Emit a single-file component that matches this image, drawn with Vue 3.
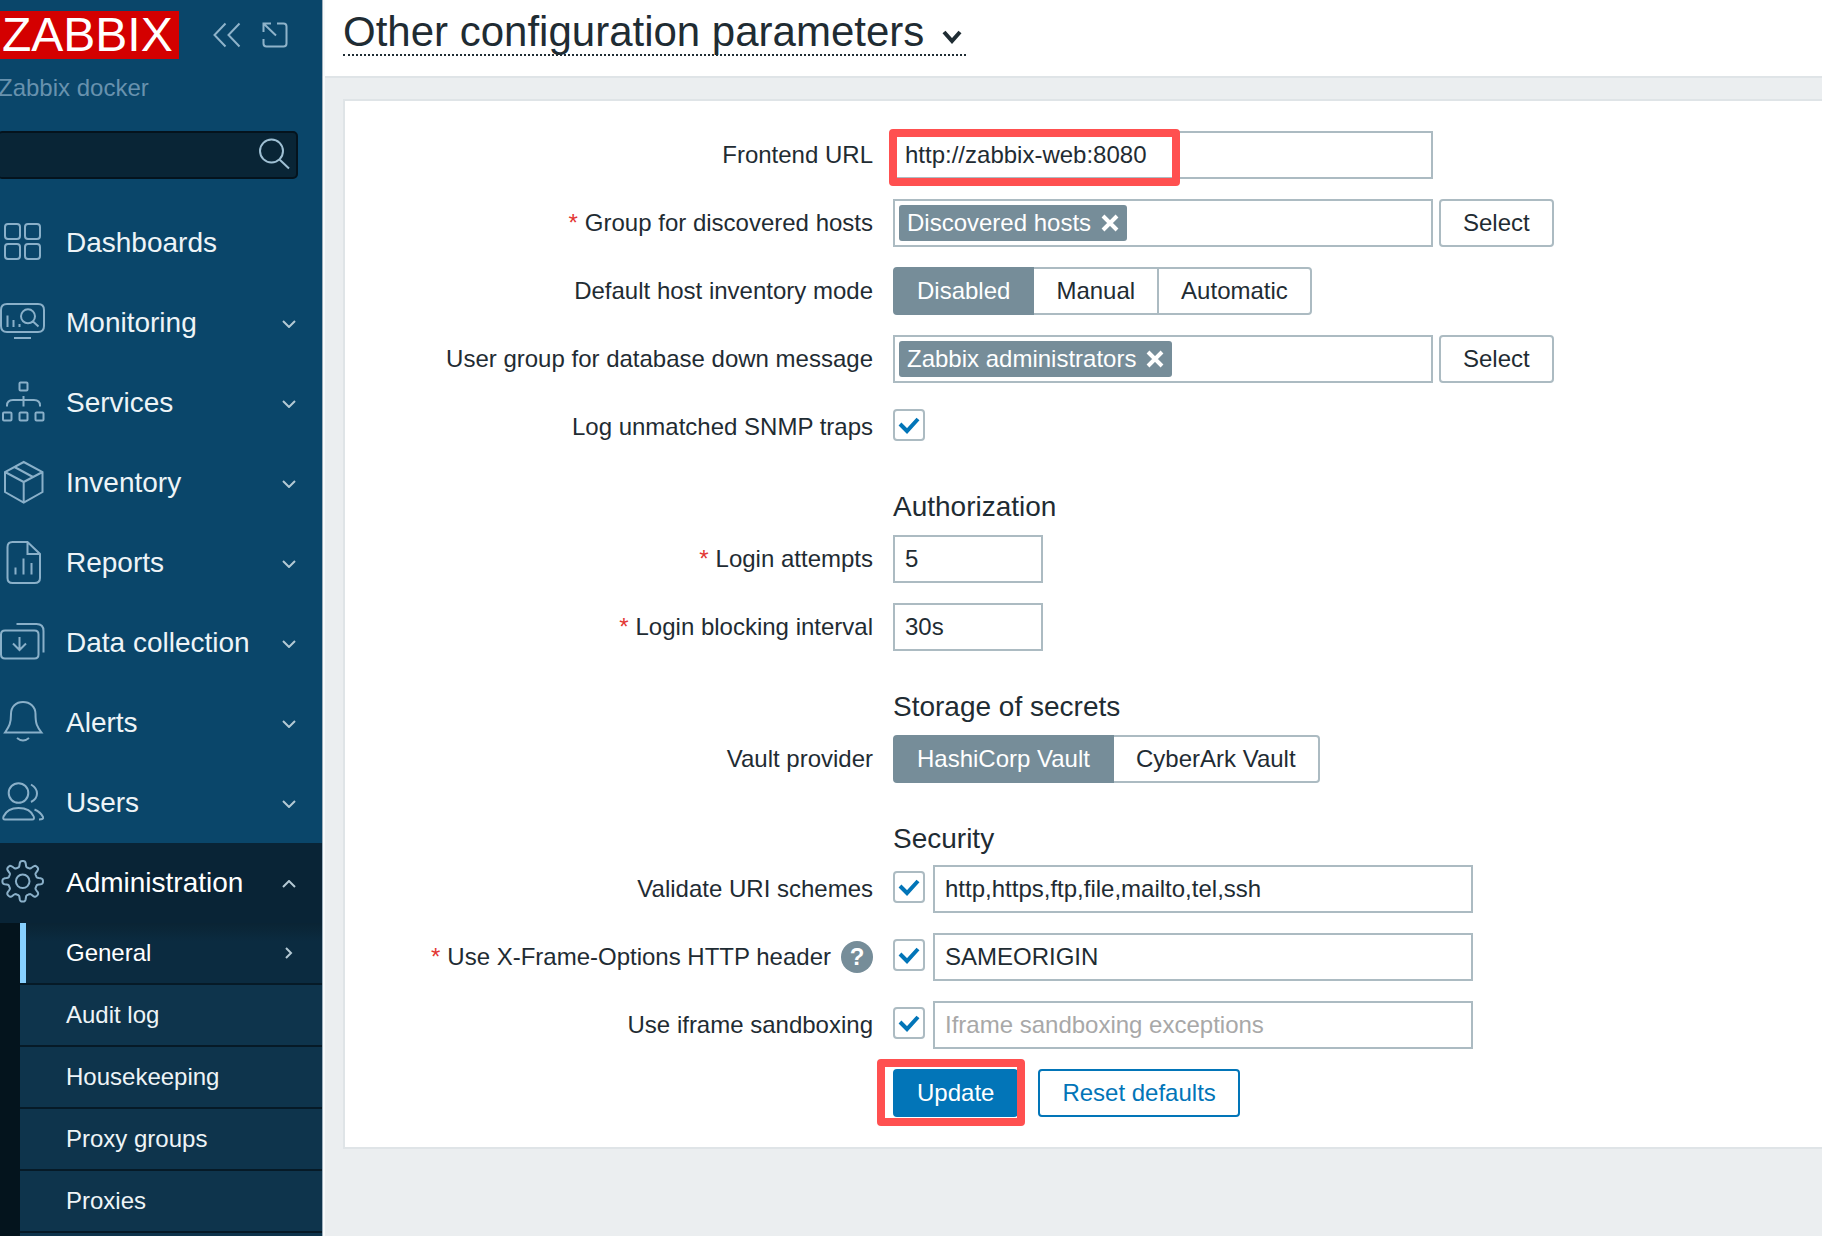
<script setup>
import { ref } from 'vue'

const gearPath = (() => {
  const points = []
  for (let i = 0; i < 192; i++) {
    const a = (i / 192) * Math.PI * 2
    const r = 17.4 + 3 * Math.tanh(2.2 * Math.cos(8 * a) - 0.3)
    points.push(`${(22.7 + r * Math.cos(a)).toFixed(2)} ${(21.3 + r * Math.sin(a)).toFixed(2)}`)
  }
  return `M${points.join('L')}Z M29.5 21.3a6.8 6.8 0 1 1-13.6 0a6.8 6.8 0 1 1 13.6 0Z`
})()

const menu = [
  {
    label: 'Dashboards',
    icon: 'M8 4h9q3 0 3 3v9q0 3-3 3H8q-3 0-3-3V7q0-3 3-3ZM28 4h9q3 0 3 3v9q0 3-3 3h-9q-3 0-3-3V7q0-3 3-3ZM8 24h9q3 0 3 3v9q0 3-3 3H8q-3 0-3-3v-9q0-3 3-3ZM28 24h9q3 0 3 3v9q0 3-3 3h-9q-3 0-3-3v-9q0-3 3-3Z'
  },
  {
    label: 'Monitoring',
    arrow: 'down',
    icon: 'M7 4h31q6 0 6 6v16q0 6-6 6H7q-6 0-6-6V10q0-6 6-6ZM14 38h17M7.5 15.5V27M13.5 20V27M19.5 24V27M35 16.3a7 7 0 1 1-14 0a7 7 0 1 1 14 0ZM33 21.5l5.5 5'
  },
  {
    label: 'Services',
    arrow: 'down',
    icon: 'M20.5 2.5h6q1 0 1 1v6q0 1-1 1h-6q-1 0-1-1v-6q0-1 1-1ZM23.5 16v10.5M7 26.5v-1q0-5.5 6-5.5h21q6 0 6 5.5v1M4 32.5h6.500q1 0 1 1v6q0 1-1 1H4q-1 0-1-1v-6q0-1 1-1ZM20.500 32.500h6q1 0 1 1v6q0 1-1 1h-6q-1 0-1-1v-6q0-1 1-1ZM36.500 32.500h6q1 0 1 1v6q0 1-1 1h-6q-1 0-1-1v-6q0-1 1-1Z'
  },
  {
    label: 'Inventory',
    arrow: 'down',
    icon: 'M23.7 2L42.5 12V32L23.7 42.5L5 32V12ZM5 12L23.7 22L42.5 12M23.7 22V42.5M14.5 7L33 17'
  },
  {
    label: 'Reports',
    arrow: 'down',
    icon: 'M27.5 2H12.5q-5 0-5 5v31q0 5 5 5h22q5.5 0 5.5-5V14ZM27.5 2V14H40M15.5 27.5V34.5M23.5 18.5V34.5M31.5 23V34.5'
  },
  {
    label: 'Data collection',
    arrow: 'down',
    icon: 'M5 10.5h29.5q4 0 4 4v20q0 4-4 4H5q-4 0-4-4v-20q0-4 4-4ZM16.5 4h20q7 0 7 7v21.5M19.5 17v12.5M13 23.5l6.5 6.5l6.5-6.5'
  },
  {
    label: 'Alerts',
    arrow: 'down',
    icon: 'M5 32.5C9 26.5 11 24 11 14C11 6.5 16 2 23 2C30 2 35.5 6.5 35.5 14C35.5 24 37 26.5 41.5 32.5ZM17 38q6 5 12 0'
  },
  {
    label: 'Users',
    arrow: 'down',
    icon: 'M28.3 13a9.8 9.8 0 1 1-19.6 0a9.8 9.8 0 1 1 19.6 0ZM5 39.5q-2.5 0-1.5-3C6 31 11 28 18.5 28C26 28 31.5 31 33.7 36.5q1 3-1.5 3ZM31 4.5q6 3.5 6 9t-6 8.5M34.5 29.5q6 2.5 8.5 7.5q1 2.5-4 2.5'
  },
  { label: 'Administration', arrow: 'up', icon: gearPath, active: true }
]

const submenu = ['General', 'Audit log', 'Housekeeping', 'Proxy groups', 'Proxies']

const search = ref('')
const url = ref('http://zabbix-web:8080')
const inventoryMode = ref('Disabled')
const logTraps = ref(true)
const attempts = ref('5')
const interval = ref('30s')
const vault = ref('HashiCorp Vault')
const validateUri = ref(true)
const uriSchemes = ref('http,https,ftp,file,mailto,tel,ssh')
const useXFrame = ref(true)
const xFrame = ref('SAMEORIGIN')
const useSandbox = ref(true)
const sandbox = ref('')
</script>

<template>
  <div class="page">
    <aside class="sidebar">
      <div class="brand">
        <a class="logo" href="#">ZABBIX</a>
        <div class="brand-tools">
          <button type="button" aria-label="Collapse sidebar">
            <svg width="28" height="26" viewBox="0 0 28 26"><path d="M12.5 1.500L1.500 13L12.500 24.500M26.500 1.500L15.500 13L26.500 24.500" /></svg>
          </button>
          <button type="button" aria-label="Hide sidebar">
            <svg width="26" height="26" viewBox="0 0 26 26"><path d="M9 1.500H1.500V10M1.500 1.500L14 13.500M15 1.500h6.500q3 0 3 3v17q0 3-3 3h-17q-3 0-3-3V17" /></svg>
          </button>
        </div>
      </div>
      <div class="server">Zabbix docker</div>
      <form class="search" role="search" @submit.prevent>
        <input v-model="search" type="text" aria-label="Search" />
        <button type="submit" aria-label="Search">
          <svg width="32" height="32" viewBox="0 0 32 32"><path d="M24 13a11.500 11.500 0 1 1-23 0a11.500 11.500 0 1 1 23 0ZM20.500 21.500L30 30.500" /></svg>
        </button>
      </form>
      <nav>
        <a v-for="item in menu" :key="item.label" href="#" class="item" :class="{ active: item.active }">
          <svg class="icon" width="46" height="46" viewBox="0 0 46 46"><path :d="item.icon" /></svg>
          <span>{{ item.label }}</span>
          <svg v-if="item.arrow" class="arrow" width="14" height="8" viewBox="0 0 14 8">
            <path :d="item.arrow === 'down' ? 'M1 1L7 7L13 1' : 'M1 7L7 1L13 7'" />
          </svg>
        </a>
      </nav>
      <nav class="submenu">
        <a v-for="(name, i) in submenu" :key="name" href="#" class="subitem" :class="{ current: i === 0 }">
          <span>{{ name }}</span>
          <svg v-if="i === 0" class="arrow" width="10" height="12" viewBox="0 0 10 12"><path d="M2 1L7 6L2 11" /></svg>
        </a>
      </nav>
    </aside>

    <div class="main">
      <header>
        <h1>
          <button type="button" class="title">
            <span>Other configuration parameters</span>
            <svg width="20" height="14" viewBox="0 0 20 14"><path d="M2 2L10 11L18 2" /></svg>
          </button>
        </h1>
      </header>

      <form class="card" @submit.prevent>
        <div class="row">
          <label class="label" for="url">Frontend URL</label>
          <div class="field">
            <div class="marked wide">
              <input id="url" v-model="url" class="text" type="text" />
              <span class="mark mark-url"></span>
            </div>
          </div>
        </div>
        <div class="row">
          <label class="label required" for="group-select">Group for discovered hosts</label>
          <div class="field">
            <div class="multi wide">
              <span class="chip">Discovered hosts
                <button type="button" aria-label="Remove Discovered hosts"><svg width="18" height="18" viewBox="0 0 18 18"><path d="M2 2L16 16M16 2L2 16" /></svg></button>
              </span>
            </div>
            <button id="group-select" type="button" class="btn">Select</button>
          </div>
        </div>
        <div class="row">
          <span id="mode-label" class="label">Default host inventory mode</span>
          <div class="segments" role="radiogroup" aria-labelledby="mode-label">
            <label v-for="mode in ['Disabled', 'Manual', 'Automatic']" :key="mode" :class="{ on: inventoryMode === mode }">
              <input v-model="inventoryMode" type="radio" name="mode" :value="mode" />{{ mode }}
            </label>
          </div>
        </div>
        <div class="row">
          <label class="label" for="user-group-select">User group for database down message</label>
          <div class="field">
            <div class="multi wide">
              <span class="chip">Zabbix administrators
                <button type="button" aria-label="Remove Zabbix administrators"><svg width="18" height="18" viewBox="0 0 18 18"><path d="M2 2L16 16M16 2L2 16" /></svg></button>
              </span>
            </div>
            <button id="user-group-select" type="button" class="btn">Select</button>
          </div>
        </div>
        <div class="row">
          <label class="label" for="traps">Log unmatched SNMP traps</label>
          <div class="field"><input id="traps" v-model="logTraps" class="check" type="checkbox" /></div>
        </div>

        <h2>Authorization</h2>
        <div class="row">
          <label class="label required" for="attempts">Login attempts</label>
          <div class="field"><input id="attempts" v-model="attempts" class="text short" type="text" /></div>
        </div>
        <div class="row">
          <label class="label required" for="interval">Login blocking interval</label>
          <div class="field"><input id="interval" v-model="interval" class="text short" type="text" /></div>
        </div>

        <h2>Storage of secrets</h2>
        <div class="row">
          <span id="vault-label" class="label">Vault provider</span>
          <div class="segments" role="radiogroup" aria-labelledby="vault-label">
            <label v-for="name in ['HashiCorp Vault', 'CyberArk Vault']" :key="name" :class="{ on: vault === name }">
              <input v-model="vault" type="radio" name="vault" :value="name" />{{ name }}
            </label>
          </div>
        </div>

        <h2 class="tight">Security</h2>
        <div class="row">
          <label class="label" for="validate">Validate URI schemes</label>
          <div class="field checked">
            <input id="validate" v-model="validateUri" class="check" type="checkbox" />
            <input v-model="uriSchemes" class="text wide" type="text" aria-label="Valid URI schemes" />
          </div>
        </div>
        <div class="row">
          <div class="label">
            <label class="required" for="xframe">Use X-Frame-Options HTTP header</label>
            <button type="button" class="help" aria-label="Help">?</button>
          </div>
          <div class="field checked">
            <input id="xframe" v-model="useXFrame" class="check" type="checkbox" />
            <input v-model="xFrame" class="text wide" type="text" aria-label="X-Frame-Options value" />
          </div>
        </div>
        <div class="row">
          <label class="label" for="sandbox">Use iframe sandboxing</label>
          <div class="field checked">
            <input id="sandbox" v-model="useSandbox" class="check" type="checkbox" />
            <input v-model="sandbox" class="text wide" type="text" placeholder="Iframe sandboxing exceptions" aria-label="Iframe sandboxing exceptions" />
          </div>
        </div>

        <div class="row">
          <div class="actions">
            <div class="marked">
              <button type="submit" class="btn primary">Update</button>
              <span class="mark mark-update"></span>
            </div>
            <button type="button" class="btn outline">Reset defaults</button>
          </div>
        </div>
      </form>
    </div>
  </div>
</template>

<style>
body {
  background: #ebeef0;
}
</style>

<style scoped>
* {
  box-sizing: border-box;
}
.page {
  display: flex;
  height: 100vh;
  overflow: hidden;
  font: 24px/28px "Liberation Sans", Arial, sans-serif;
  color: #1f2c33;
}
button,
input {
  font: inherit;
  color: inherit;
  margin: 0;
}
button {
  padding: 0;
  border: 0;
  background: none;
  cursor: pointer;
}
a {
  color: inherit;
  text-decoration: none;
}
svg {
  display: block;
  flex: none;
  fill: none;
  stroke: currentColor;
  stroke-width: 2;
}

/* Sidebar */
.sidebar {
  display: flex;
  flex-direction: column;
  flex: 0 0 322px;
  position: relative;
  background: #0a466a;
  box-shadow: 1px 0 #9fb0bd, 3px 0 #f8fafb;
}
.brand {
  display: flex;
  align-items: flex-start;
  justify-content: space-between;
  padding: 11px 34px 15px 0;
}
.logo {
  padding: 0 6px 0 2px;
  background: #d40000;
  color: #fff;
  font-size: 48px;
  line-height: 48px;
}
.brand-tools {
  display: flex;
  gap: 21px;
  margin-top: 11px;
  color: #8fb3ca;
}
.server {
  margin-left: -2px;
  color: #6892ae;
}
.search {
  display: flex;
  position: relative;
  margin: 29px 24px 24px -3px;
}
.search input {
  width: 100%;
  height: 48px;
  padding: 0 48px 0 12px;
  border: 2px solid #04131d;
  border-radius: 5px;
  background: #092536;
  color: #fff;
  outline: none;
}
.search button {
  position: absolute;
  top: 7px;
  right: 7px;
  color: #9fc0d4;
}
.item {
  display: flex;
  align-items: center;
  gap: 20px;
  height: 80px;
  padding-right: 26px;
  color: #eef4f7;
  font-size: 28px;
}
.item .icon {
  color: #8ab0c9;
}
.arrow {
  margin-left: auto;
  color: #b4c9d4;
}
.item .arrow {
  margin-top: 2px;
}
.item.active {
  background: #092436;
  color: #fff;
}
.submenu {
  flex: 1;
  border-left: 20px solid #04141d;
  background: #0e344c;
}
.subitem {
  display: flex;
  align-items: center;
  height: 62px;
  padding: 0 28px 0 46px;
  border-bottom: 2px solid #061a27;
  color: #eef4f7;
}
.subitem.current {
  padding-left: 46px;
  background: linear-gradient(90deg, #87d0ff 6px, transparent 6px), linear-gradient(#0a2434, #0b2b40 30%);
  color: #fff;
}

/* Header */
.main {
  flex: 1;
  min-width: 0;
}
header {
  height: 78px;
  padding: 10px 21px 0;
  border-bottom: 2px solid #dfe4e7;
  background: #fff;
}
h1,
h2 {
  margin: 0;
  font-weight: 400;
}
h1 {
  display: flex;
}
.title {
  display: flex;
  align-items: center;
  gap: 18px;
  padding-right: 4px;
  border-bottom: 2px dotted #1f2c33;
  font-size: 42px;
  line-height: 44px;
}
.title svg {
  margin-top: 10px;
  stroke-width: 4;
}

/* Form */
.card {
  display: flex;
  flex-direction: column;
  gap: 20px;
  margin: 21px 0 0 21px;
  padding: 30px 0;
  border: 2px solid #dfe4e7;
  border-right: 0;
  background: #fff;
}
.row {
  display: flex;
  gap: 20px;
}
.label {
  display: flex;
  align-items: center;
  justify-content: flex-end;
  gap: 10px;
  flex: 0 0 528px;
  height: 48px;
}
.required::before {
  content: "*";
  margin-right: 7px;
  color: #e33734;
}
.label.required {
  gap: 0;
}
.field {
  display: flex;
  flex: 1;
  gap: 6px;
}
.checked {
  gap: 8px;
}
.wide {
  flex: 0 1 540px;
  min-width: 0;
}
.text {
  width: 100%;
  height: 48px;
  padding: 0 10px;
  border: 2px solid #acbbc2;
  border-radius: 0;
  background: #fff;
  outline: none;
}
.short {
  width: 150px;
}
.text::placeholder {
  color: #a8a8a8;
  opacity: 1;
}
.multi {
  display: flex;
  height: 48px;
  padding: 4px;
  border: 2px solid #acbbc2;
}
.chip {
  display: flex;
  align-items: center;
  gap: 10px;
  padding: 0 8px;
  border-radius: 3px;
  background: #768d99;
  color: #fff;
  white-space: nowrap;
}
.chip svg {
  stroke-width: 4;
}
.btn {
  height: 48px;
  padding: 0 22px;
  border: 2px solid #acbbc2;
  border-radius: 4px;
  background: #fff;
  white-space: nowrap;
}
.primary {
  border-color: #0275b8;
  background: #0275b8;
  color: #fff;
}
.outline {
  border-color: #0275b8;
  color: #0275b8;
}
.segments {
  display: flex;
}
.segments label {
  display: flex;
  align-items: center;
  position: relative;
  height: 48px;
  padding: 0 22px;
  border: 2px solid #acbbc2;
  border-left-width: 0;
  cursor: pointer;
}
.segments label:first-child {
  border-left-width: 2px;
  border-radius: 4px 0 0 4px;
}
.segments label:last-child {
  border-radius: 0 4px 4px 0;
}
.segments .on {
  border-color: #768d99;
  background: #768d99;
  color: #fff;
}
.segments input {
  position: absolute;
  inset: 0;
  opacity: 0;
}
.check {
  appearance: none;
  flex: none;
  width: 32px;
  height: 32px;
  margin-top: 6px;
  border: 2px solid #acbbc2;
  border-radius: 4px;
  background: #fff;
}
.check:checked {
  background: #fff url("data:image/svg+xml,%3Csvg xmlns='http://www.w3.org/2000/svg' viewBox='0 0 28 28'%3E%3Cpath d='M5 13L12 20L23 8' fill='none' stroke='%230275b8' stroke-width='4'/%3E%3C/svg%3E") center / 28px 28px no-repeat;
}
h2 {
  margin: 20px 0 -8px 548px;
  font-size: 28px;
  line-height: 32px;
}
.tight {
  margin-bottom: -10px;
}
.help {
  width: 32px;
  height: 32px;
  border-radius: 50%;
  background: #768d99;
  color: #fff;
  font-weight: 700;
  line-height: 32px;
}
.actions {
  display: flex;
  gap: 20px;
  margin-left: 548px;
}

/* Callout frames */
.marked {
  display: flex;
  position: relative;
}
.mark {
  position: absolute;
  border: 8px solid #ff5050;
  border-radius: 4px;
  pointer-events: none;
}
.mark-url {
  top: -2px;
  left: -4px;
  width: 291px;
  height: 57px;
}
.mark-update {
  inset: -10px -7px -9px -16px;
}
</style>
